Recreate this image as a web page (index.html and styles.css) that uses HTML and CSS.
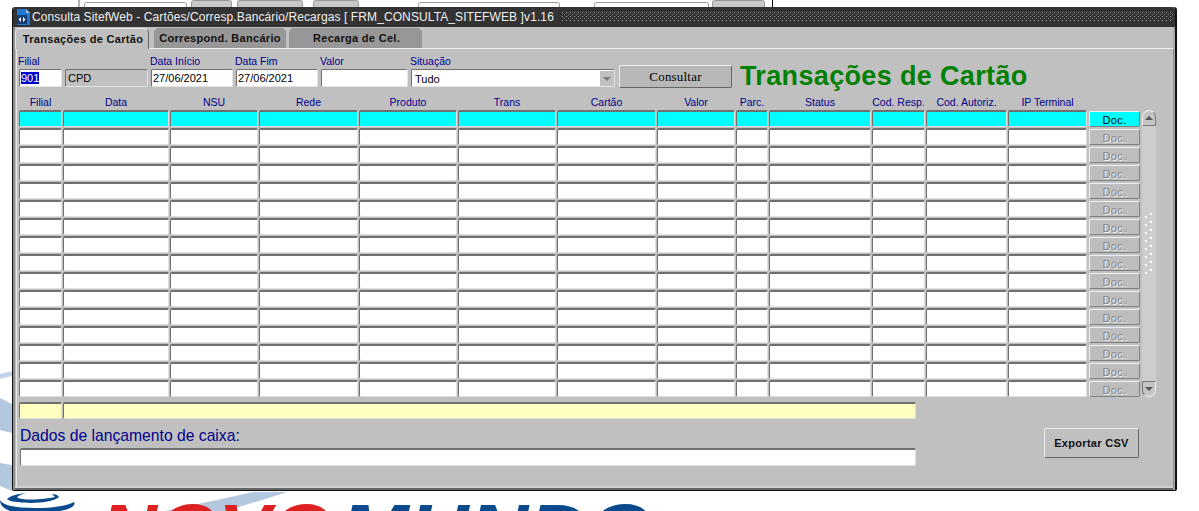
FILE: index.html
```html
<!DOCTYPE html>
<html lang="pt-BR">
<head>
    <meta charset="UTF-8">
    <title>Consulta SitefWeb</title>
    <link rel="stylesheet" href="styles.css">
</head>
<body>

<div class="desktop">
    <svg class="wallpaper" width="1199" height="511" viewBox="0 0 1199 511">
        <rect x="78" y="0" width="2" height="7" fill="#b4b4b4"/>
        <rect x="84.500" y="2.500" width="102" height="8" rx="2" fill="#fff" stroke="#999"/>
        <rect x="191.500" y="0.500" width="40" height="10" rx="2" fill="#c8c8c8" stroke="#999"/>
        <rect x="237.500" y="0.500" width="65" height="10" rx="2" fill="#c8c8c8" stroke="#999"/>
        <rect x="313.500" y="0.500" width="45" height="10" rx="2" fill="#c8c8c8" stroke="#999"/>
        <rect x="418.500" y="2.500" width="141" height="8" rx="2" fill="#fff" stroke="#999"/>
        <rect x="594.500" y="2.500" width="114" height="8" rx="2" fill="#fff" stroke="#999"/>
        <rect x="712.500" y="0.500" width="52" height="10" rx="2" fill="#c8c8c8" stroke="#999"/>
        <rect x="772" y="0" width="1" height="7" fill="#000"/>
        <path d="M0 374 L12 371 L12 376 L0 379Z" fill="#c4d4e8"/>
        <path d="M0 398 L12 404 L12 433 L0 430Z" fill="#b3c7de"/>
        <path d="M0 463 L12 465 L12 491 L0 486Z" fill="#b3c7de"/>
        <path d="M253 492 L287 492 C270 498 245 505 225 511 L165 511 C195 505 225 498 253 492Z" fill="#b3c7de"/>
        <path d="M7 499 C10 496 17 494 26 493 C19 495 16 497 18 498 C28 501 46 499 55 497 L52 494 C55 494 58 495 59 497 C52 503 30 504 18 502 C13 502 9 501 7 499Z" fill="#0b4a8c"/>
        <path d="M0 500 C2 505 14 508 36 508 C52 508 66 506 74 502 C76 505 72 509 60 511 L10 511 C3 508 0 505 0 500Z" fill="#0b4a8c"/>
        <text class="brand" x="100" y="555" fill="#de2020" textLength="232" lengthAdjust="spacingAndGlyphs">NOVO</text>
        <text class="brand" x="340" y="555" fill="#0b4a8c" textLength="312" lengthAdjust="spacingAndGlyphs">MUNDO</text>
    </svg>

    <div class="window">
        <div class="titlebar">
            <svg class="app-icon" width="15" height="18" viewBox="0 0 15 18">
                <path d="M1 0H10L14 4V16H1Z" fill="#1e78d0"/>
                <path d="M10 0L14 4H10Z" fill="#9cc8f0"/>
                <rect x="1" y="6" width="10" height="9" fill="#123f78"/>
                <path d="M5 8L2.500 10.500L5 13ZM7 8L9.500 10.500L7 13Z" fill="#fff"/>
            </svg>
            <span class="title-text">Consulta SitefWeb - Cartões/Corresp.Bancário/Recargas [ FRM_CONSULTA_SITEFWEB ]v1.16</span>
            <div class="grip"></div>
        </div>

        <div class="tabs">
            <div class="tab active">Transações de Cartão</div>
            <div class="tab second">Correspond. Bancário</div>
            <div class="tab third">Recarga de Cel.</div>
        </div>

        <div class="panel">
            <div class="filters">
                <div class="field w-filial"><label>Filial</label><div class="box"><span class="selected">901</span></div></div>
                <div class="field w-cpd"><label>&nbsp;</label><div class="box readonly">CPD</div></div>
                <div class="field w-date"><label>Data Início</label><div class="box">27/06/2021</div></div>
                <div class="field w-date"><label>Data Fim</label><div class="box">27/06/2021</div></div>
                <div class="field w-valor"><label>Valor</label><div class="box"></div></div>
                <div class="field w-sit">
                    <label>Situação</label>
                    <div class="box select">
                        <span class="select-value">Tudo</span>
                        <span class="select-arrow"></span>
                    </div>
                </div>
                <button class="btn-consultar">Consultar</button>
                <h1 class="page-title">Transações de Cartão</h1>
            </div>

            <div class="cols heads">
                <span>Filial</span><span>Data</span><span>NSU</span><span>Rede</span><span>Produto</span><span>Trans</span><span>Cartão</span><span>Valor</span><span>Parc.</span><span>Status</span><span>Cod. Resp.</span><span>Cod. Autoriz.</span><span>IP Terminal</span>
            </div>

            <div class="table-area">
                <div class="cols rows">
                    <div class="c on"></div><div class="c on"></div><div class="c on"></div><div class="c on"></div><div class="c on"></div><div class="c on"></div><div class="c on"></div><div class="c on"></div><div class="c on"></div><div class="c on"></div><div class="c on"></div><div class="c on"></div><div class="c on"></div>
                    <div class="c"></div><div class="c"></div><div class="c"></div><div class="c"></div><div class="c"></div><div class="c"></div><div class="c"></div><div class="c"></div><div class="c"></div><div class="c"></div><div class="c"></div><div class="c"></div><div class="c"></div>
                    <div class="c"></div><div class="c"></div><div class="c"></div><div class="c"></div><div class="c"></div><div class="c"></div><div class="c"></div><div class="c"></div><div class="c"></div><div class="c"></div><div class="c"></div><div class="c"></div><div class="c"></div>
                    <div class="c"></div><div class="c"></div><div class="c"></div><div class="c"></div><div class="c"></div><div class="c"></div><div class="c"></div><div class="c"></div><div class="c"></div><div class="c"></div><div class="c"></div><div class="c"></div><div class="c"></div>
                    <div class="c"></div><div class="c"></div><div class="c"></div><div class="c"></div><div class="c"></div><div class="c"></div><div class="c"></div><div class="c"></div><div class="c"></div><div class="c"></div><div class="c"></div><div class="c"></div><div class="c"></div>
                    <div class="c"></div><div class="c"></div><div class="c"></div><div class="c"></div><div class="c"></div><div class="c"></div><div class="c"></div><div class="c"></div><div class="c"></div><div class="c"></div><div class="c"></div><div class="c"></div><div class="c"></div>
                    <div class="c"></div><div class="c"></div><div class="c"></div><div class="c"></div><div class="c"></div><div class="c"></div><div class="c"></div><div class="c"></div><div class="c"></div><div class="c"></div><div class="c"></div><div class="c"></div><div class="c"></div>
                    <div class="c"></div><div class="c"></div><div class="c"></div><div class="c"></div><div class="c"></div><div class="c"></div><div class="c"></div><div class="c"></div><div class="c"></div><div class="c"></div><div class="c"></div><div class="c"></div><div class="c"></div>
                    <div class="c"></div><div class="c"></div><div class="c"></div><div class="c"></div><div class="c"></div><div class="c"></div><div class="c"></div><div class="c"></div><div class="c"></div><div class="c"></div><div class="c"></div><div class="c"></div><div class="c"></div>
                    <div class="c"></div><div class="c"></div><div class="c"></div><div class="c"></div><div class="c"></div><div class="c"></div><div class="c"></div><div class="c"></div><div class="c"></div><div class="c"></div><div class="c"></div><div class="c"></div><div class="c"></div>
                    <div class="c"></div><div class="c"></div><div class="c"></div><div class="c"></div><div class="c"></div><div class="c"></div><div class="c"></div><div class="c"></div><div class="c"></div><div class="c"></div><div class="c"></div><div class="c"></div><div class="c"></div>
                    <div class="c"></div><div class="c"></div><div class="c"></div><div class="c"></div><div class="c"></div><div class="c"></div><div class="c"></div><div class="c"></div><div class="c"></div><div class="c"></div><div class="c"></div><div class="c"></div><div class="c"></div>
                    <div class="c"></div><div class="c"></div><div class="c"></div><div class="c"></div><div class="c"></div><div class="c"></div><div class="c"></div><div class="c"></div><div class="c"></div><div class="c"></div><div class="c"></div><div class="c"></div><div class="c"></div>
                    <div class="c"></div><div class="c"></div><div class="c"></div><div class="c"></div><div class="c"></div><div class="c"></div><div class="c"></div><div class="c"></div><div class="c"></div><div class="c"></div><div class="c"></div><div class="c"></div><div class="c"></div>
                    <div class="c"></div><div class="c"></div><div class="c"></div><div class="c"></div><div class="c"></div><div class="c"></div><div class="c"></div><div class="c"></div><div class="c"></div><div class="c"></div><div class="c"></div><div class="c"></div><div class="c"></div>
                    <div class="c"></div><div class="c"></div><div class="c"></div><div class="c"></div><div class="c"></div><div class="c"></div><div class="c"></div><div class="c"></div><div class="c"></div><div class="c"></div><div class="c"></div><div class="c"></div><div class="c"></div>
                </div>

                <div class="docs">
                    <div class="doc on">Doc.</div>
                    <div class="doc">Doc.</div>
                    <div class="doc">Doc.</div>
                    <div class="doc">Doc.</div>
                    <div class="doc">Doc.</div>
                    <div class="doc">Doc.</div>
                    <div class="doc">Doc.</div>
                    <div class="doc">Doc.</div>
                    <div class="doc">Doc.</div>
                    <div class="doc">Doc.</div>
                    <div class="doc">Doc.</div>
                    <div class="doc">Doc.</div>
                    <div class="doc">Doc.</div>
                    <div class="doc">Doc.</div>
                    <div class="doc">Doc.</div>
                    <div class="doc">Doc.</div>
                </div>

                <div class="scrollbar">
                    <div class="scroll-btn up"><span></span></div>
                    <div class="scroll-track">
                        <svg width="10" height="66" viewBox="0 0 10 66" fill="#fff">
                            <rect x="6" y="0" width="2" height="2"/><rect x="1" y="3" width="2" height="2"/>
                            <rect x="6" y="8" width="2" height="2"/><rect x="1" y="11" width="2" height="2"/>
                            <rect x="6" y="16" width="2" height="2"/><rect x="1" y="19" width="2" height="2"/>
                            <rect x="6" y="24" width="2" height="2"/><rect x="1" y="27" width="2" height="2"/>
                            <rect x="6" y="32" width="2" height="2"/><rect x="1" y="35" width="2" height="2"/>
                            <rect x="6" y="40" width="2" height="2"/><rect x="1" y="43" width="2" height="2"/>
                            <rect x="6" y="48" width="2" height="2"/><rect x="1" y="51" width="2" height="2"/>
                            <rect x="6" y="56" width="2" height="2"/><rect x="1" y="59" width="2" height="2"/>
                        </svg>
                    </div>
                    <div class="scroll-btn down"><span></span></div>
                </div>
            </div>

            <div class="totals">
                <div class="c total-a"></div>
                <div class="c total-b"></div>
            </div>

            <div class="bottom">
                <div class="caixa">
                    <label class="caixa-label">Dados de lançamento de caixa:</label>
                    <div class="c caixa-box"></div>
                </div>
                <button class="btn-export">Exportar CSV</button>
            </div>
        </div>
    </div>
</div>

</body>
</html>
```

FILE: styles.css
```css
* {
    margin: 0;
    padding: 0;
    box-sizing: border-box;
}

body {
    background: #fff;
    font-family: "Liberation Sans", Arial, sans-serif;
    overflow: hidden;
}

.desktop {
    position: relative;
    width: 1199px;
    height: 511px;
    overflow: hidden;
}

.wallpaper {
    position: absolute;
    left: 0;
    top: 0;
}

.brand {
    font-family: "Liberation Sans", Arial, sans-serif;
    font-size: 72px;
    font-weight: bold;
    font-style: italic;
}

.window {
    position: absolute;
    left: 12px;
    top: 7px;
    width: 1165px;
    height: 484px;
    display: flex;
    flex-direction: column;
    background: #c0c0c0;
    border: 1px solid #111;
    border-width: 0 2px 1px 1px;
    border-radius: 3px 3px 2px 2px;
    box-shadow: inset 2px 0 0 #8c8c8c, inset -2px 0 0 #a8a8a8, inset 0 -2px 0 #666, inset 0 -4px 0 #d0d0d0;
}

/* title bar */
.titlebar {
    height: 20px;
    flex: none;
    display: flex;
    align-items: center;
    background: #333;
    border-radius: 3px 3px 0 0;
    padding-left: 3px;
}

.app-icon {
    flex: none;
    margin-top: 2px;
}

.title-text {
    margin-left: 1px;
    font-size: 12px;
    letter-spacing: .1px;
    color: #f0f0f0;
    white-space: nowrap;
}

.grip {
    flex: 1;
    height: 10px;
    margin: 0 2px 0 8px;
    background-image:
        radial-gradient(circle at .5px .5px, #a0a0a0 .7px, transparent .8px),
        radial-gradient(circle at .5px .5px, #777 .7px, transparent .8px);
    background-size: 4px 4px;
    background-position: 0 0, 2px 2px;
}

/* tabs */
.tabs {
    height: 21px;
    flex: none;
    display: flex;
    align-items: flex-end;
    padding-left: 2px;
}

.tab {
    height: 20px;
    font-size: 11px;
    font-weight: bold;
    letter-spacing: .3px;
    color: #111;
    line-height: 21px;
    text-align: center;
    background: #979797;
    border-radius: 5px 5px 0 0;
}

.tab.active {
    width: 134px;
    height: 21px;
    background: #c0c0c0;
    border-top: 1px solid #e8e8e8;
    border-left: 1px solid #e8e8e8;
    border-right: 1px solid #666;
    position: relative;
    z-index: 1;
    margin-bottom: -1px;
    padding-left: 2px;
}

.tab.second {
    width: 132px;
    margin-left: 5px;
}

.tab.third {
    width: 133px;
    margin-left: 3px;
    padding-left: 2px;
}

/* main panel */
.panel {
    flex: 1;
    margin: 0 1px 2px 3px;
    padding: 6px 0 0 2px;
    border-top: 1px solid #f0f0f0;
    border-left: 1px solid #e8e8e8;
    border-right: 1px solid #8c8c8c;
}

.filters {
    display: flex;
    align-items: flex-end;
    height: 32px;
    column-gap: 3px;
}

.field label {
    display: block;
    height: 13px;
    margin: -1px 0 1px -1px;
    font-size: 10.5px;
    line-height: 12px;
    color: #00008b;
}

.w-filial { width: 43px; }
.w-cpd { width: 83px; }
.w-date { width: 82px; }
.w-valor { width: 87px; }
.w-sit { width: 204px; }

.box {
    height: 18px;
    background: #fff;
    border: 1px solid;
    border-color: #707070 #e4e4e4 #e4e4e4 #707070;
    border-radius: 2px;
    font-size: 11px;
    line-height: 17px;
    padding-left: 1px;
    color: #000;
    white-space: nowrap;
    overflow: hidden;
}

.box.readonly {
    background: #c0c0c0;
    padding-left: 2px;
}

.selected {
    background: #00c;
    color: #fff;
}

.select {
    display: flex;
    justify-content: space-between;
    padding-left: 3px;
}

.select-value {
    line-height: 19px;
}

.select-arrow {
    width: 14px;
    background: #c0c0c0;
    position: relative;
    margin: 1px 0 0;
}

.select-arrow::after {
    content: "";
    position: absolute;
    left: 3px;
    top: 6px;
    border: 4px solid transparent;
    border-top: 4px solid #7c7c7c;
    border-bottom: 0;
}

.btn-consultar {
    width: 113px;
    height: 23px;
    margin: 0 0 -1px 1px;
    background: #b8b8b8;
    border: 1px solid;
    border-color: #eee #666 #666 #eee;
    border-radius: 2px;
    font-family: "Liberation Serif", "Times New Roman", serif;
    font-size: 13px;
    letter-spacing: .2px;
    color: #000;
}

.page-title {
    margin: 0 0 -4px 5px;
    font-size: 27px;
    line-height: 29px;
    font-weight: bold;
    letter-spacing: .35px;
    color: #008000;
    white-space: nowrap;
}

/* table */
.cols {
    display: grid;
    grid-template-columns: 43px 106px 88px 99px 98px 98px 99px 78px 32px 102px 53px 81px 79px;
    column-gap: 1px;
}

.heads {
    width: 1068px;
    height: 15px;
    margin-top: 8px;
    font-size: 10.5px;
    line-height: 14px;
    color: #00008b;
    text-align: center;
    white-space: nowrap;
}

.table-area {
    display: flex;
    height: 287px;
}

.rows {
    width: 1068px;
    grid-auto-rows: 17px;
    row-gap: 1px;
}

.c {
    background: #fff;
    border: 1px solid;
    border-width: 2px 1px 1px 1px;
    border-color: #707070 #e0e0e0 #e0e0e0 #707070;
    border-radius: 2px;
}

.c.on {
    background: #0ff;
}

.docs {
    width: 51px;
    margin-left: 2px;
    padding-top: 1px;
    display: flex;
    flex-direction: column;
    row-gap: 2px;
}

.doc {
    height: 16px;
    background: #bdbdbd;
    border: 1px solid;
    border-color: #f0f0f0 #808080 #808080 #f0f0f0;
    border-radius: 2px;
    font-size: 11px;
    letter-spacing: .4px;
    line-height: 17px;
    text-align: center;
    color: #858585;
    text-shadow: 1px 1px 0 #eee;
}

.doc.on {
    background: #0ff;
    color: #000;
    text-shadow: none;
}

.scrollbar {
    width: 14px;
    margin-left: 2px;
    display: flex;
    flex-direction: column;
}

.scroll-btn {
    height: 16px;
    flex: none;
    background: #c4c4c4;
    border: 1px solid;
    display: flex;
    align-items: center;
    justify-content: center;
}

.scroll-btn.up {
    border-color: #eee #777 #777 #eee;
    border-radius: 7px 7px 0 0;
}

.scroll-btn.down {
    border-color: #777 #eee #eee #777;
    border-radius: 0 0 7px 7px;
}

.scroll-btn span {
    border: 4px solid transparent;
    border-top: 0;
    border-bottom: 4px solid #555;
}

.scroll-btn.down span {
    border-bottom: 0;
    border-top: 4px solid #555;
}

.scroll-track {
    flex: 1;
    background: #cdcdcd;
    display: flex;
    justify-content: center;
    align-items: flex-start;
    padding-top: 87px;
}

.totals {
    display: flex;
    column-gap: 1px;
    margin-top: 5px;
    height: 17px;
}

.total-a,
.total-b {
    background: #ffffc0;
}

.total-a { width: 43px; }
.total-b { width: 853px; }

.bottom {
    display: flex;
    align-items: flex-start;
    margin-top: 8px;
}

.caixa {
    width: 897px;
    padding-left: 1px;
}

.caixa-label {
    display: block;
    height: 21px;
    font-size: 15.7px;
    line-height: 18px;
    color: #00008b;
}

.caixa-box {
    height: 18px;
}

.btn-export {
    width: 95px;
    height: 30px;
    margin: 1px 0 0 128px;
    background: #c0c0c0;
    border: 1px solid;
    border-color: #f0f0f0 #666 #666 #f0f0f0;
    border-radius: 2px;
    font-family: "Liberation Sans", Arial, sans-serif;
    font-size: 11px;
    font-weight: bold;
    letter-spacing: .3px;
    color: #111;
}
```
